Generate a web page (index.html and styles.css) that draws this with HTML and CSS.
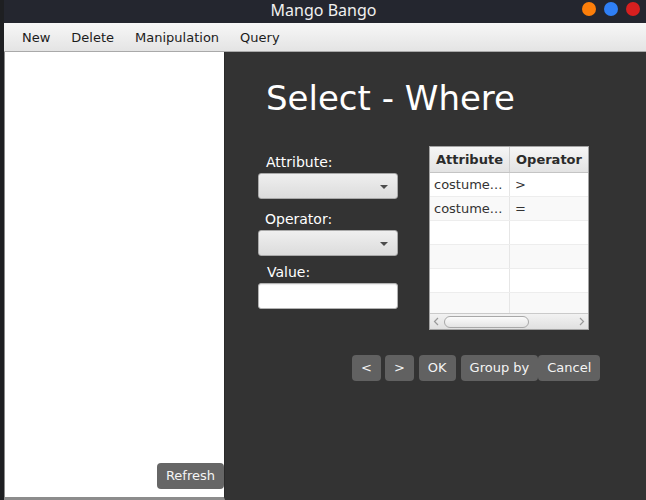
FILE: index.html
```html
<!DOCTYPE html>
<html>
<head>
<meta charset="utf-8">
<link rel="stylesheet" href="styles.css">
</head>
<body>
<div class="screen">
  <div class="strip"></div>
  <div class="window">
    <div class="titlebar">
      <span></span>
      <span class="title">Mango Bango</span>
      <div class="dots">
        <span class="dot orange"></span>
        <span class="dot blue"></span>
        <span class="dot red"></span>
      </div>
    </div>
    <div class="menubar">
      <span class="menu">New</span>
      <span class="menu">Delete</span>
      <span class="menu">Manipulation</span>
      <span class="menu">Query</span>
    </div>
    <div class="content">
      <div class="sidebar">
        <button class="btn refresh">Refresh</button>
      </div>
      <div class="main">
        <h1 class="heading">Select - Where</h1>
        <div class="body">
          <div class="form">
            <label class="lbl lbl-attr">Attribute:</label>
            <div class="combo"><span class="arrow"></span></div>
            <label class="lbl lbl-op">Operator:</label>
            <div class="combo"><span class="arrow"></span></div>
            <label class="lbl lbl-val">Value:</label>
            <div class="field"></div>
          </div>
          <div class="tbl">
            <div class="thead">
              <div class="th">Attribute</div>
              <div class="th">Operator</div>
            </div>
            <div class="rows">
              <div class="row"><div class="td">costume...</div><div class="td">&gt;</div></div>
              <div class="row alt"><div class="td">costume...</div><div class="td">=</div></div>
              <div class="row"><div class="td"></div><div class="td"></div></div>
              <div class="row alt"><div class="td"></div><div class="td"></div></div>
              <div class="row"><div class="td"></div><div class="td"></div></div>
              <div class="row alt"><div class="td"></div><div class="td"></div></div>
            </div>
            <div class="hscroll">
              <svg class="chev" width="6" height="9" viewBox="0 0 6 9"><polyline points="5,1 1.5,4.5 5,8" fill="none" stroke="#9a9a9a" stroke-width="1.2"/></svg>
              <div class="thumb"></div>
              <svg class="chev chev-r" width="6" height="9" viewBox="0 0 6 9"><polyline points="1,1 4.5,4.5 1,8" fill="none" stroke="#9a9a9a" stroke-width="1.2"/></svg>
            </div>
          </div>
        </div>
        <div class="actions">
          <button class="btn act">&lt;</button>
          <button class="btn act gap4">&gt;</button>
          <button class="btn act gap5">OK</button>
          <button class="btn act gap5">Group by</button>
          <button class="btn act">Cancel</button>
        </div>
      </div>
    </div>
  </div>
</div>
</body>
</html>
```
FILE: styles.css
```css
* { box-sizing: border-box; }
html, body { margin: 0; padding: 0; }
body {
  width: 646px;
  height: 500px;
  overflow: hidden;
  background: #1e1e1e;
  font-family: "DejaVu Sans", sans-serif;
}
.screen { display: flex; width: 646px; height: 500px; }
.strip { width: 4px; background: #1e1f22; flex: none; }
.window { flex: 1; display: flex; flex-direction: column; min-width: 0; }

.titlebar {
  height: 23px;
  background: #24262f;
  display: grid;
  grid-template-columns: 1fr auto 1fr;
  align-items: center;
  padding-right: 6px;
}
.title {
  font-family: "Noto Sans", sans-serif;
  font-size: 16px;
  line-height: 21px;
  color: #f0f0f0;
  padding-bottom: 2px;
  padding-left: 3px;
}
.dots { justify-self: end; display: flex; gap: 8px; padding-bottom: 5px; }
.dot { width: 14px; height: 14px; border-radius: 50%; display: block; }
.orange { background: #fc7e0a; }
.blue { background: #2f7ff5; }
.red { background: #d71f1f; }

.menubar {
  height: 29px;
  background: linear-gradient(#f7f7f7, #e4e4e4);
  border-bottom: 1px solid #a9a9a9;
  display: flex;
  align-items: center;
  padding-left: 7.5px;
  padding-top: 1px;
}
.menu {
  font-size: 13px;
  color: #1c1c1c;
  padding: 0 10.5px;
}

.content { flex: 1; display: flex; min-height: 0; background: #333333; }
.sidebar {
  width: 221px;
  flex: none;
  background: #ffffff;
  border-left: 1px solid #8a8a8a;
  border-bottom: 3px solid #8c8c8c;
  border-right: 1px solid #2a2a2a;
  display: flex;
  flex-direction: column;
  justify-content: flex-end;
  align-items: flex-end;
  padding-bottom: 8px;
}
.btn {
  font-family: "DejaVu Sans", sans-serif;
  font-size: 13px;
  color: #f4f4f4;
  background: #616161;
  border: none;
  border-radius: 4px;
  height: 26px;
  line-height: 26px;
  padding: 0 9px;
  margin: 0;
}
.refresh { padding: 0 9px; background: #666666; }

.main { flex: 1; display: flex; flex-direction: column; padding-top: 26px; padding-left: 33px; }
.heading {
  margin: 0 0 0 8px;
  font-size: 34px;
  font-weight: normal;
  line-height: 40px;
  color: #ffffff;
}
.body { display: flex; align-items: flex-start; margin-top: 28px; gap: 31px; }
.form { width: 140px; display: flex; flex-direction: column; padding-top: 7.5px; }
.lbl { font-size: 14px; line-height: 17px; color: #ffffff; margin-bottom: 2.5px; }
.lbl-attr { padding-left: 8px; }
.lbl-op { padding-left: 7px; margin-top: 11.5px; }
.lbl-val { padding-left: 9px; margin-top: 7.5px; }
.combo {
  height: 26px;
  border: 1px solid #a9a9a9;
  border-radius: 3px;
  background: linear-gradient(#efefef, #dcdcdc);
  display: flex;
  align-items: center;
  justify-content: flex-end;
  padding-right: 9px;
}
.arrow {
  width: 0; height: 0;
  border-left: 4px solid transparent;
  border-right: 4px solid transparent;
  border-top: 4px solid #4c4c4c;
  margin-top: 1px;
}
.field {
  height: 26px;
  border: 1px solid #b2b2b2;
  border-radius: 3px;
  background: #ffffff;
  box-shadow: inset 0 1px 1px rgba(0,0,0,0.08);
}

.tbl {
  width: 160px;
  border: 1px solid #a3a3a3;
  background: #ffffff;
  margin-top: 0;
}
.thead {
  display: grid;
  grid-template-columns: 80px 78px;
  height: 26px;
  background: linear-gradient(#f6f6f6, #e3e3e3);
  border-bottom: 1px solid #c4c4c4;
}
.th {
  font-size: 13px;
  font-weight: bold;
  color: #2b2b2b;
  display: flex;
  align-items: center;
  justify-content: center;
  white-space: nowrap;
  overflow: hidden;
  border-right: 1px solid #cfcfcf;
}
.th + .th { border-right: none; }
.rows { height: 140px; overflow: hidden; }
.row {
  display: grid;
  grid-template-columns: 80px 78px;
  height: 24px;
  border-bottom: 1px solid #ededed;
}
.row.alt { background: #f9f9f9; }
.td {
  font-size: 13px;
  line-height: 23px;
  color: #333333;
  padding-left: 4px;
  border-right: 1px solid #e6e6e6;
  white-space: nowrap;
  overflow: hidden;
}
.td + .td { border-right: none; padding-left: 5px; }
.hscroll {
  height: 16px;
  background: linear-gradient(#f2f2f2, #e0e0e0);
  border-top: 1px solid #cacaca;
  display: flex;
  align-items: center;
  padding: 0 3px;
}
.chev { flex: none; display: block; }
.thumb {
  width: 85px;
  height: 12px;
  margin-left: 5px;
  border: 1px solid #a8a8a8;
  border-radius: 6px;
  background: linear-gradient(#fbfbfb, #e4e4e4);
}
.chev-r { margin-left: auto; }

.actions { display: flex; margin-top: 25px; margin-left: 94px; }
.gap4 { margin-left: 4px; }
.gap5 { margin-left: 5px; }
```
